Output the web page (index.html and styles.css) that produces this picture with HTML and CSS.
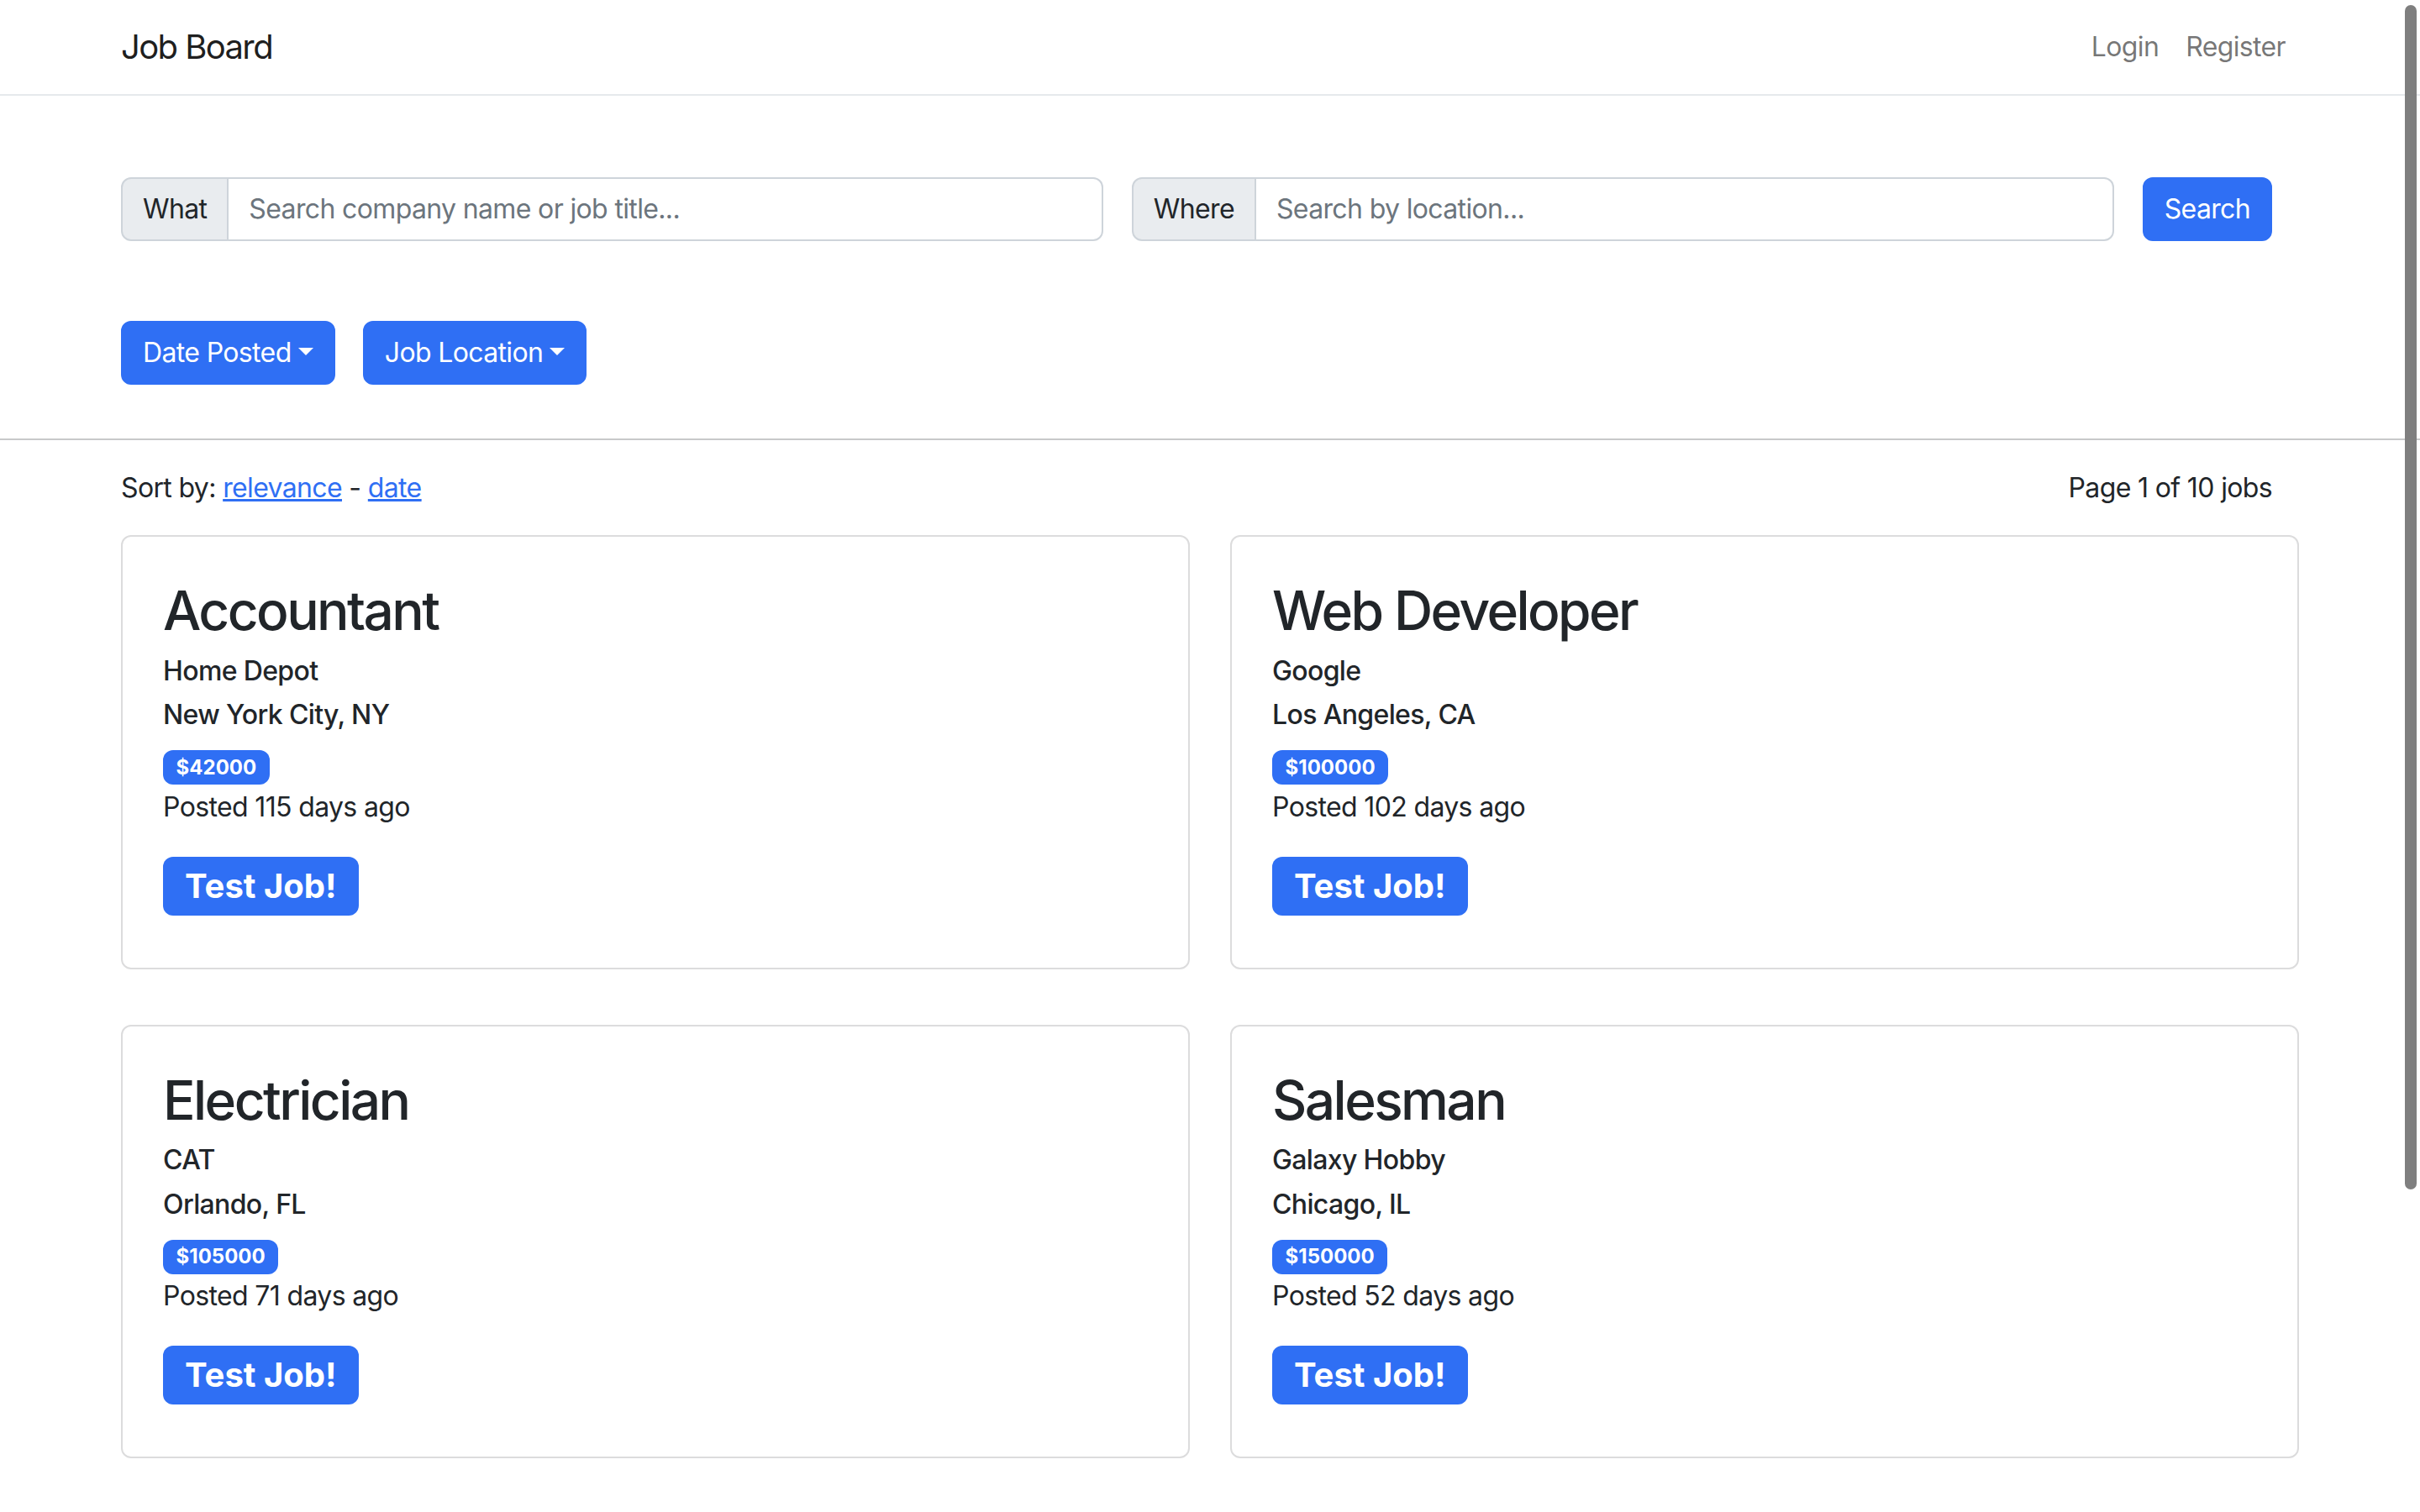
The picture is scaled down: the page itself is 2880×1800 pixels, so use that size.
FILE: index.html
```html
<!DOCTYPE html>
<html lang="en">
<head>
<meta charset="utf-8">
<title>Job Board</title>
<link rel="stylesheet" href="styles.css">
</head>
<body>
<nav class="navbar">
  <div class="container nav-inner">
    <a class="brand" href="#">Job Board</a>
    <ul class="nav-links">
      <li><a href="#">Login</a></li>
      <li><a href="#">Register</a></li>
    </ul>
  </div>
</nav>

<section class="container search-section">
  <form class="search-row">
    <div class="input-group">
      <span class="addon">What</span>
      <input class="field" type="text" placeholder="Search company name or job title...">
    </div>
    <div class="input-group">
      <span class="addon">Where</span>
      <input class="field" type="text" placeholder="Search by location...">
    </div>
    <button class="btn btn-primary" type="button">Search</button>
  </form>
  <div class="filters">
    <button class="btn btn-primary dropdown-toggle" type="button">Date Posted</button>
    <button class="btn btn-primary dropdown-toggle" type="button">Job Location</button>
  </div>
</section>

<hr class="divider">

<main class="container">
  <div class="sort-row">
    <div>Sort by: <a href="#">relevance</a> - <a href="#">date</a></div>
    <div>Page 1 of 10 jobs</div>
  </div>

  <div class="job-grid">
    <div class="card">
      <h2 class="card-title">Accountant</h2>
      <h6 class="card-subtitle company">Home Depot</h6>
      <h6 class="card-subtitle">New York City, NY</h6>
      <div class="badge-line"><span class="badge">$42000</span></div>
      <p class="card-text">Posted 115 days ago</p>
      <a class="job-btn" href="#">Test Job!</a>
    </div>
    <div class="card">
      <h2 class="card-title">Web Developer</h2>
      <h6 class="card-subtitle company">Google</h6>
      <h6 class="card-subtitle">Los Angeles, CA</h6>
      <div class="badge-line"><span class="badge">$100000</span></div>
      <p class="card-text">Posted 102 days ago</p>
      <a class="job-btn" href="#">Test Job!</a>
    </div>
    <div class="card">
      <h2 class="card-title">Electrician</h2>
      <h6 class="card-subtitle company">CAT</h6>
      <h6 class="card-subtitle">Orlando, FL</h6>
      <div class="badge-line"><span class="badge">$105000</span></div>
      <p class="card-text">Posted 71 days ago</p>
      <a class="job-btn" href="#">Test Job!</a>
    </div>
    <div class="card">
      <h2 class="card-title">Salesman</h2>
      <h6 class="card-subtitle company">Galaxy Hobby</h6>
      <h6 class="card-subtitle">Chicago, IL</h6>
      <div class="badge-line"><span class="badge">$150000</span></div>
      <p class="card-text">Posted 52 days ago</p>
      <a class="job-btn" href="#">Test Job!</a>
    </div>
  </div>
</main>

<div class="scroll-thumb"></div>
</body>
</html>
```

FILE: styles.css
```css
html {
  font-size: 32px;
  overflow: hidden;
}

* {
  box-sizing: border-box;
}

body {
  margin: 0;
  font-family: Inter, "Liberation Sans", Arial, sans-serif;
  font-size: 32px;
  line-height: 1.5;
  letter-spacing: -0.02em;
  color: #212529;
  background: #fff;
}

a {
  color: #2f6ff4;
}

.container {
  width: 2640px;
  margin: 0 auto;
  padding: 0 24px;
}

/* navbar */
.navbar {
  height: 114px;
  border-bottom: 2px solid #e6e9ec;
}

.nav-inner {
  height: 112px;
  display: flex;
  align-items: center;
  justify-content: space-between;
}

.brand {
  font-size: 40px;
  line-height: 60px;
  letter-spacing: -0.04em;
  color: rgba(0, 0, 0, 0.9);
  text-decoration: none;
}

.nav-links {
  list-style: none;
  margin: 0;
  padding: 0;
  display: flex;
}

.nav-links a {
  display: block;
  padding: 0 16px;
  color: rgba(0, 0, 0, 0.55);
  text-decoration: none;
}

/* search */
.search-section {
  padding-top: 97px;
  padding-bottom: 64px;
}

.search-row {
  display: flex;
  gap: 34px;
  margin: 0 32px 0 0;
  height: 76px;
}

.input-group {
  flex: 1;
  display: flex;
}

.addon {
  display: flex;
  align-items: center;
  padding: 0 24px;
  background: #e9ecef;
  border: 2px solid #ced4da;
  border-radius: 12px 0 0 12px;
}

.field {
  flex: 1;
  min-width: 0;
  font: inherit;
  letter-spacing: -0.02em;
  color: #212529;
  padding: 0 24px;
  border: 2px solid #ced4da;
  border-left: 0;
  border-radius: 0 12px 12px 0;
  outline: none;
}

.field::placeholder {
  color: #6c757d;
}

.btn {
  font: inherit;
  letter-spacing: -0.02em;
  border: 2px solid #2f6ff4;
  border-radius: 12px;
  padding: 0 24px;
  cursor: pointer;
}

.btn-primary {
  background: #2f6ff4;
  color: #fff;
}

.filters {
  display: flex;
  gap: 33px;
  margin-top: 95px;
}

.filters .btn {
  height: 76px;
}

.dropdown-toggle::after {
  content: "";
  display: inline-block;
  margin-left: 0.255em;
  vertical-align: 0.255em;
  border-top: 0.3em solid #fff;
  border-right: 0.3em solid transparent;
  border-left: 0.3em solid transparent;
}

.divider {
  margin: 0;
  border: 0;
  border-top: 2px solid #c8c9ca;
}

/* results */
.sort-row {
  display: flex;
  justify-content: space-between;
  margin: 33px 32px 0 0;
  line-height: 48px;
}

.job-grid {
  display: grid;
  grid-template-columns: 1fr 1fr;
  column-gap: 48px;
  row-gap: 66px;
  margin-top: 32px;
}

.card {
  border: 2px solid #dcdcdd;
  border-radius: 12px;
  padding: 50px 48px 48px;
}

.card-title {
  margin: 0 0 14px;
  font-size: 64px;
  font-weight: 500;
  line-height: 1.2;
  letter-spacing: -0.04em;
}

.card-subtitle {
  margin: 0 0 16px;
  font-size: 32px;
  font-weight: 500;
  line-height: 1.2;
}

.card-subtitle.company {
  margin-bottom: 14px;
}

.badge-line {
  line-height: 48px;
}

.badge {
  display: inline-block;
  font-size: 24px;
  font-weight: 700;
  line-height: 1;
  letter-spacing: 0;
  padding: 8.4px 15.6px;
  color: #fff;
  background: #2f6ff4;
  border-radius: 12px;
}

.card-text {
  margin: 2px 0 35px;
  line-height: 48px;
}

.job-btn {
  display: inline-flex;
  align-items: center;
  height: 70px;
  padding: 0 26px;
  margin-bottom: 14px;
  font-size: 40px;
  font-weight: 700;
  letter-spacing: 0;
  color: #fff;
  background: #2f6ff4;
  border-radius: 12px;
  text-decoration: none;
}

.scroll-thumb {
  position: fixed;
  top: 6px;
  right: 4px;
  width: 14px;
  height: 1410px;
  background: #7f7f7f;
  border-radius: 7px;
}
```
